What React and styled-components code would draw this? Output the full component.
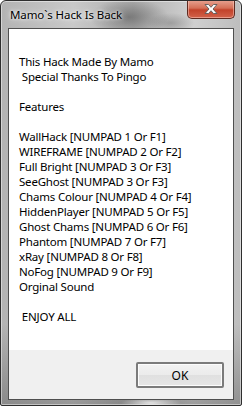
import React from "react";
import styled, { createGlobalStyle } from "styled-components";

const Global = createGlobalStyle`
  html, body {
    margin: 0;
    padding: 0;
    background: #ffffff;
  }
`;

const lines = [
  "This Hack Made By Mamo",
  " Special Thanks To Pingo",
  "",
  "Features",
  "",
  "WallHack [NUMPAD 1 Or F1]",
  "WIREFRAME [NUMPAD 2 Or F2]",
  "Full Bright [NUMPAD 3 Or F3]",
  "SeeGhost [NUMPAD 3 Or F3]",
  "Chams Colour [NUMPAD 4 Or F4]",
  "HiddenPlayer [NUMPAD 5 Or F5]",
  "Ghost Chams [NUMPAD 6 Or F6]",
  "Phantom [NUMPAD 7 Or F7]",
  "xRay [NUMPAD 8 Or F8]",
  "NoFog [NUMPAD 9 Or F9]",
  "Orginal Sound",
  "",
  " ENJOY ALL",
];

function App() {
  return (
    <>
      <Global />
      <Window>
        <TitleBar>
          <Title>Mamo`s Hack Is Back</Title>
          <CloseButton>
            <svg width="16" height="12" viewBox="0 0 16 12">
              <path
                d="M2 1.5 L5.5 1.5 L8 4.3 L10.5 1.5 L14 1.5 L10 6 L14 10.5 L10.5 10.5 L8 7.7 L5.5 10.5 L2 10.5 L6 6 Z"
                fill="#ffffff"
                stroke="#5a5a5a"
                strokeWidth="0.9"
                strokeLinejoin="round"
              />
            </svg>
          </CloseButton>
        </TitleBar>
        <Client>
          <Message>
            {lines.map((l, i) => (
              <Line key={i}>{l || "\u00a0"}</Line>
            ))}
          </Message>
          <Footer>
            <OkButton>OK</OkButton>
          </Footer>
        </Client>
      </Window>
    </>
  );
}

const Window = styled.div`
  box-sizing: border-box;
  width: 242px;
  height: 406px;
  border: 1px solid #2e2e2e;
  border-radius: 6px 6px 2px 2px;
  background:
    radial-gradient(ellipse 40px 18px at 128px 16px, rgba(70, 70, 70, 0.5), transparent),
    radial-gradient(ellipse 24px 10px at 170px 22px, rgba(90, 90, 90, 0.35), transparent),
    radial-gradient(ellipse 30px 6px at 150px 402px, rgba(255, 255, 255, 0.75), transparent),
    linear-gradient(180deg, transparent 80%, rgba(60, 60, 60, 0.35) 100%),
    linear-gradient(90deg, #b3b3b3 0%, #c9c9c9 30%, #adadad 55%, #d0d0d0 80%, #bdbdbd 100%);
  display: flex;
  flex-direction: column;
  box-shadow: inset 0 0 0 1px rgba(255, 255, 255, 0.45);
  overflow: hidden;
`;

const TitleBar = styled.div`
  height: 26px;
  display: flex;
  align-items: flex-start;
  justify-content: space-between;
`;

const Title = styled.div`
  font-family: "Noto Sans", "DejaVu Sans", sans-serif;
  font-size: 11.5px;
  letter-spacing: -0.1px;
  color: #000000;
  padding: 6px 0 0 9px;
  text-shadow: 0 0 6px rgba(255, 255, 255, 0.9), 0 0 3px rgba(255, 255, 255, 0.9);
`;

const CloseButton = styled.div`
  box-sizing: border-box;
  width: 48px;
  height: 19px;
  margin-right: 6px;
  margin-top: -1px;
  border: 1px solid #5e2a20;
  border-top: none;
  border-radius: 0 0 5px 5px;
  background: linear-gradient(180deg, #e8a493 0%, #d46f57 45%, #c2422a 55%, #d2624a 100%);
  box-shadow: inset 0 0 0 1px rgba(255, 210, 200, 0.5);
  display: flex;
  align-items: center;
  justify-content: center;
`;

const Client = styled.div`
  flex: 1;
  margin: 1px 7px 5px 7px;
  border: 1px solid #4f4f4f;
  display: flex;
  flex-direction: column;
  background: #f0f0f0;
`;

const Message = styled.div`
  flex: 1;
  background: #ffffff;
  padding: 25px 0 0 10px;
`;

const Line = styled.div`
  font-family: "Noto Sans", "DejaVu Sans", sans-serif;
  font-size: 11.5px;
  letter-spacing: -0.2px;
  line-height: 15px;
  height: 15px;
  color: #000000;
  white-space: pre;
`;

const Footer = styled.div`
  height: 49px;
  flex: none;
  display: flex;
  align-items: center;
  justify-content: flex-end;
  padding-right: 9px;
  background: #f0f0f0;
`;

const OkButton = styled.button`
  box-sizing: border-box;
  width: 88px;
  height: 26px;
  margin-top: 1px;
  border: 2px solid #7b7b7b;
  border-radius: 2px;
  background: linear-gradient(180deg, #f2f2f2 0%, #ebebeb 50%, #e0e0e0 51%, #e6e6e6 100%);
  box-shadow: inset 0 0 0 1px #fcfcfc;
  font-family: "Noto Sans", "DejaVu Sans", sans-serif;
  font-size: 12px;
  color: #000000;
  padding: 0;
`;

export default App;
